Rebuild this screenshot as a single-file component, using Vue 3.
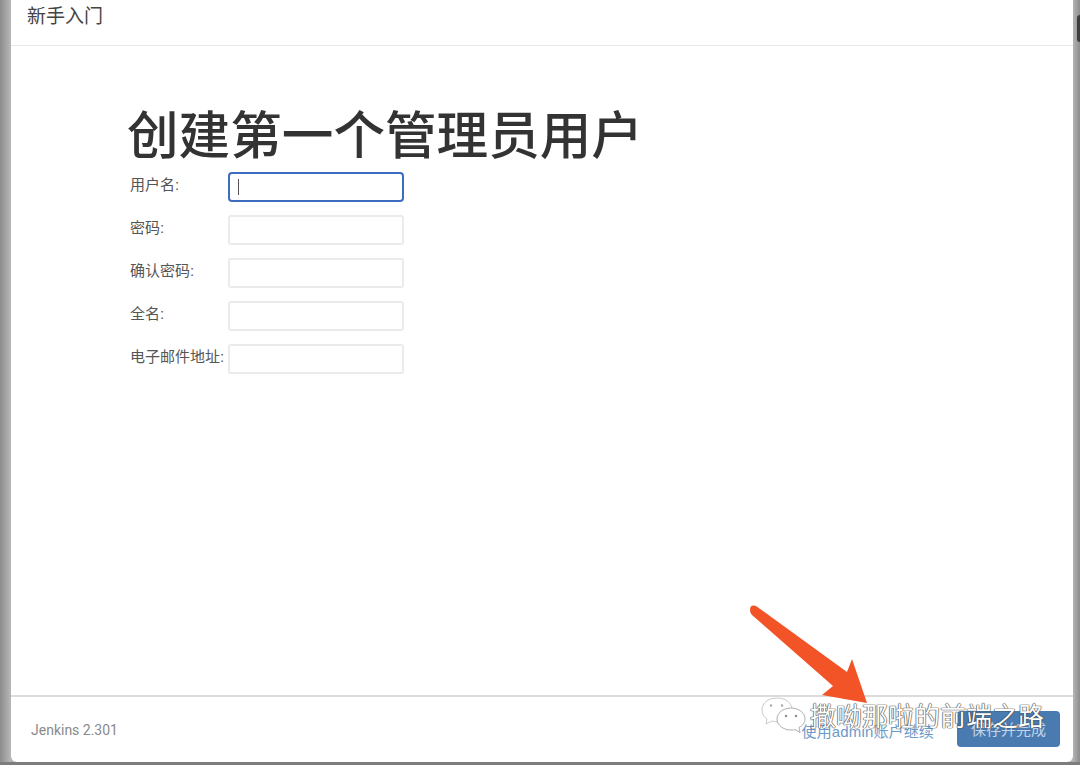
<script setup>
const fields = [
  { label: '用户名:', focus: true },
  { label: '密码:' },
  { label: '确认密码:' },
  { label: '全名:' },
  { label: '电子邮件地址:' }
]
</script>

<template>
  <div class="page">
    <div class="handle"></div>
    <div class="card">
      <header class="head">新手入门</header>
      <main class="body">
        <h1 class="title">创建第一个管理员用户</h1>
        <div class="form">
          <div v-for="f in fields" :key="f.label" class="row">
            <span class="label">{{ f.label }}</span>
            <div class="input" :class="{ focus: f.focus }"><i v-if="f.focus" class="caret"></i></div>
          </div>
        </div>
      </main>
      <footer class="foot">
        <span class="version">Jenkins 2.301</span>
        <div class="actions">
          <a class="link">使用admin账户继续</a>
          <button class="save">保存并完成</button>
        </div>
      </footer>
    </div>

    <svg class="arrow" viewBox="0 0 1080 765" width="1080" height="765">
      <path d="M750 610 Q750 604 756 606 L847 672 L852 659 L867 703 L822 695 L833 686 L752 615 Q750 613 750 610 Z" fill="#f25327" />
    </svg>

    <svg class="wechat" viewBox="0 0 48 42" width="48" height="42">
      <path d="M17 1C8 1 2 6 2 13c0 4 2 7 5 9l-1 5 6-3c2 .6 3 .7 5 .7C26 24.700 32 19 32 13 32 6 26 1 17 1Z" fill="#fff" stroke="#bdbdbd" stroke-width=".8" />
      <path d="M31 11c-8 0-14 5-14 11s6 11 14 11c2 0 3 0 4-.5l5 3-1-5c4-2 6-5 6-8.500 0-6-6-11-14-11Z" fill="#fff" stroke="#9a9a9a" stroke-width=".8" />
      <circle cx="11" cy="8.500" r="1.200" fill="#a8a8a8" />
      <circle cx="22" cy="8.500" r="1.200" fill="#a8a8a8" />
      <circle cx="26" cy="19" r="1.200" fill="#8c8c8c" />
      <circle cx="36" cy="19" r="1.200" fill="#8c8c8c" />
    </svg>
    <div class="mark">撒呦那啦的前端之路</div>
  </div>
</template>

<style>
html, body { margin: 0; padding: 0; background: #8e8e8e; }
</style>

<style scoped>
.page {
  position: relative;
  width: 1080px;
  height: 765px;
  overflow: hidden;
  background: linear-gradient(90deg, #8c8c8c 0, #b4b4b4 10px, #b4b4b4 1073px, #8c8c8c 1080px);
  font-family: "Liberation Sans", "Noto Sans CJK SC", sans-serif;
}
.page::after {
  content: "";
  position: absolute;
  left: 0;
  right: 0;
  bottom: 0;
  height: 3px;
  background: #7d7d7d;
}
.card {
  position: relative;
  z-index: 1;
  width: 1062px;
  height: 762px;
  margin-left: 11px;
  background: #fff;
  border-radius: 0 0 6px 6px;
  display: flex;
  flex-direction: column;
}
.handle {
  position: absolute;
  right: 0;
  top: 15px;
  width: 3px;
  height: 27px;
  background: #3d3d3d;
  border-radius: 3px 0 0 3px;
}
.head {
  height: 46px;
  box-sizing: border-box;
  flex: none;
  border-bottom: 1px solid #e8e8e8;
  padding: 6px 0 0 16px;
  font-size: 19px;
  line-height: 22px;
  color: #444;
}
.body {
  flex: 1;
  padding: 60px 0 0 116px;
}
.title {
  margin: 0;
  height: 66px;
  font-size: 51.6px;
  line-height: 60px;
  font-weight: 500;
  color: #333;
}
.form {
  display: flex;
  flex-direction: column;
  gap: 13px;
  padding-left: 3px;
}
.row {
  display: flex;
  height: 30px;
}
.label {
  width: 99px;
  flex: none;
  font-size: 15px;
  line-height: 25px;
  color: #555;
}
.input {
  width: 176px;
  height: 30px;
  margin-left: -1px;
  box-sizing: border-box;
  border: 2px solid #ebebeb;
  border-radius: 3px;
  background: #fff;
  display: flex;
  align-items: center;
}
.input.focus {
  border: 2px solid #3a6cc0;
  border-radius: 4px;
}
.caret {
  display: block;
  width: 1px;
  height: 16px;
  margin-left: 8px;
  background: #555;
}
.foot {
  height: 67px;
  flex: none;
  box-sizing: border-box;
  border-top: 2px solid #dcdcdc;
  display: flex;
  align-items: center;
  justify-content: space-between;
  padding: 0 13px 2px 20px;
}
.version {
  font-family: Roboto, "Liberation Sans", sans-serif;
  font-size: 14px;
  color: #8a8a8a;
  margin-top: 3px;
}
.actions {
  display: flex;
  align-items: center;
  gap: 23px;
}
.link {
  font-size: 15px;
  letter-spacing: 0.15px;
  color: #6d99c9;
  margin-top: 3px;
}
.save {
  width: 103px;
  height: 36px;
  border: 0;
  border-radius: 4px;
  background: #4a7bb0;
  color: #c4d4e6;
  font: 15px "Liberation Sans", "Noto Sans CJK SC", sans-serif;
}
.arrow {
  position: absolute;
  left: 0;
  top: 0;
  z-index: 2;
  pointer-events: none;
}
.wechat {
  position: absolute;
  left: 760px;
  top: 697px;
  z-index: 3;
}
.mark {
  position: absolute;
  left: 810px;
  top: 701px;
  z-index: 3;
  font-size: 26px;
  line-height: 32px;
  white-space: nowrap;
  color: #fff;
  text-shadow: 0 0 1px #333, 0 0 1px #333, 0 0 1px #555;
}
</style>
